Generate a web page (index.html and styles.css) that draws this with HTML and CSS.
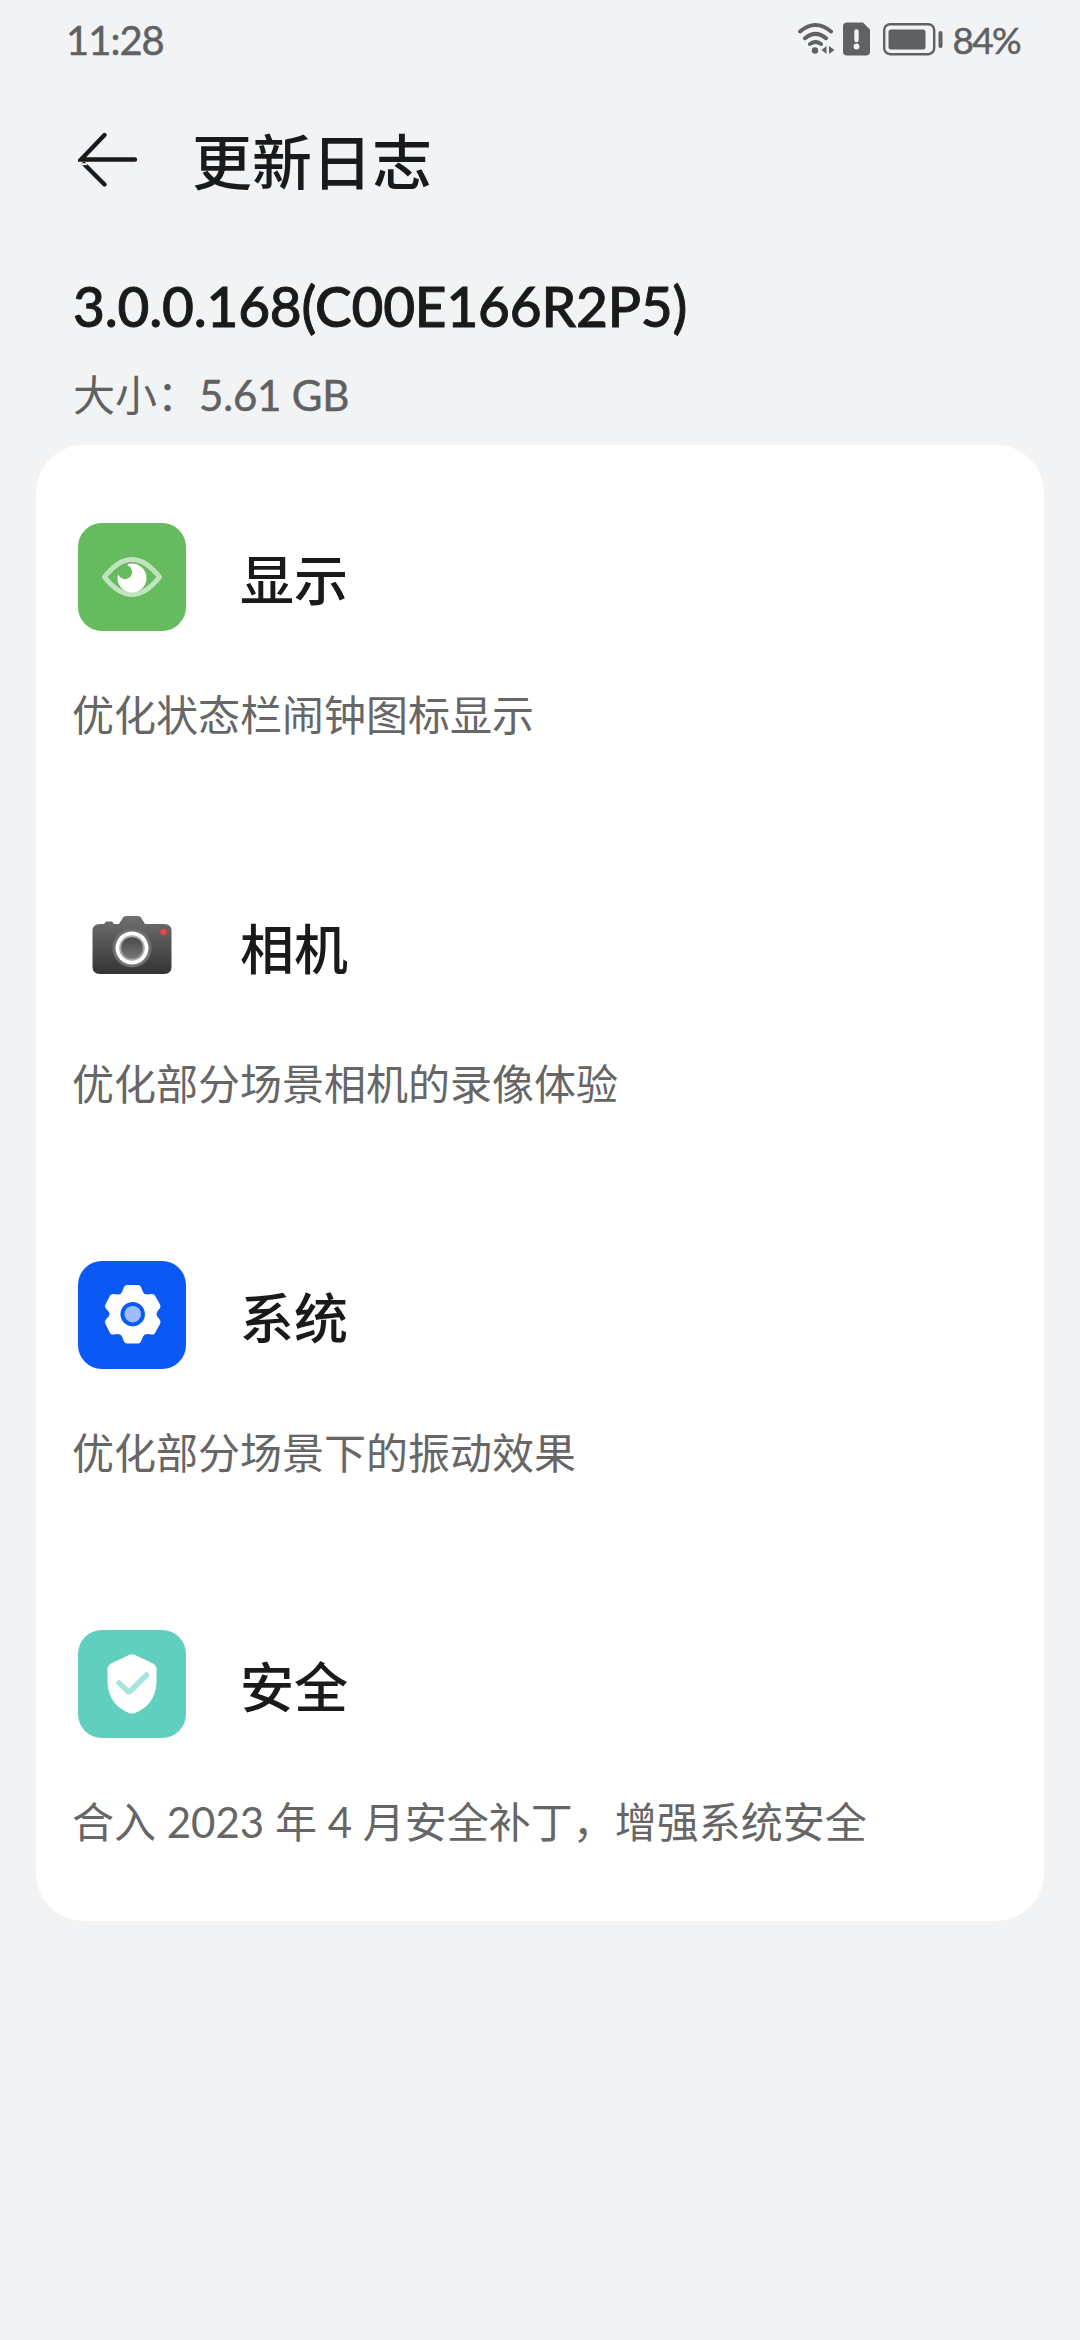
FILE: index.html
```html
<!DOCTYPE html>
<html lang="zh-CN">
<head>
<meta charset="utf-8">
<title>更新日志</title>
<link rel="stylesheet" href="styles.css">
</head>
<body>
<header class="status">
  <span class="clock">11:28</span>
  <div class="indicators">
    <svg class="wifi" width="40" height="34" viewBox="0 0 40 34" fill="none" stroke="#606163" stroke-width="4" stroke-linecap="round">
      <path d="M3 9.500Q18.500 -3.500 34 9.500M8 16.200Q18.500 7.500 29 16.200M13 22Q18.500 18 24 22"/>
      <circle cx="18" cy="28.500" r="3.200" fill="#606163" stroke="none"/>
      <path d="M29.500 24v8l-5-4zM32 24v8l5.500-4z" fill="#606163" stroke="none"/>
    </svg>
    <svg class="sim" width="27" height="34" viewBox="0 0 27 34">
      <path d="M4 0.500H20L27 7.500V29.500Q27 33.500 23 33.500H4Q0 33.500 0 29.500V4.500Q0 0.500 4 0.500Z" fill="#606163"/>
      <path d="M13.500 9.500V18" stroke="#f1f3f5" stroke-width="4.400" stroke-linecap="round"/>
      <circle cx="13.500" cy="24.500" r="2.900" fill="#f1f3f5"/>
    </svg>
    <svg class="battery" width="60" height="34" viewBox="0 0 60 34">
      <rect x="1.200" y="2.200" width="50" height="30" rx="6" fill="none" stroke="#606163" stroke-width="2.400"/>
      <rect x="5.500" y="7.500" width="37" height="20" rx="2.500" fill="#606163"/>
      <rect x="55.500" y="9" width="4" height="17" rx="2" fill="#606163"/>
    </svg>
    <span class="percent">84%</span>
  </div>
</header>
<nav class="titlebar">
  <svg class="back" width="60" height="56" viewBox="0 0 60 56" fill="none" stroke="#191a1b" stroke-width="4.400" stroke-linecap="round">
    <path d="M57 28.500H3L26.500 4"/>
    <path d="M6 33L26.500 53.500"/>
    <path d="M4 33.200h5" stroke="#f1f3f5" stroke-width="2" stroke-linecap="butt"/>
  </svg>
  <h1 class="title">更新日志</h1>
</nav>
<section class="release">
  <h2 class="version">3.0.0.168(C00E166R2P5)</h2>
  <p class="size">大小：<span class="amount">5.61 GB</span></p>
</section>
<main class="card">
  <article class="entry">
    <div class="heading">
      <svg width="108" height="108" viewBox="0 0 108 108">
        <rect width="108" height="108" rx="24" fill="#65bb5e"/>
        <path d="M26.500 54Q54 19 81.500 54Q54 89 26.500 54Z" fill="none" stroke="#c1e4bf" stroke-width="5" stroke-linejoin="round"/>
        <circle cx="54" cy="55" r="14.500" fill="#fff"/>
        <circle cx="47" cy="49" r="7.200" fill="#65bb5e"/>
        <path d="M39 51L42 43L50 40L49 45Z" fill="#65bb5e"/>
      </svg>
      <h3 class="name">显示</h3>
    </div>
    <p class="desc">优化状态栏闹钟图标显示</p>
  </article>
  <article class="entry">
    <div class="heading">
      <svg width="108" height="108" viewBox="0 0 108 108">
        <defs>
          <linearGradient id="body" x1="0" y1="0" x2="0" y2="1">
            <stop offset="0" stop-color="#707070"/>
            <stop offset="1" stop-color="#343434"/>
          </linearGradient>
          <linearGradient id="lens" x1="0" y1="0" x2="0" y2="1">
            <stop offset="0" stop-color="#484848"/>
            <stop offset="1" stop-color="#777"/>
          </linearGradient>
        </defs>
        <path d="M22 32H26L28 29.500H34L36 32H41L45 25.500Q46 24 48 24H60Q62 24 63 25.500L67 32H86Q93.500 32 93.500 39V75Q93.500 82 86 82H22Q14.500 82 14.500 75V39Q14.500 32 22 32Z" fill="url(#body)"/>
        <circle cx="54" cy="56" r="19.500" fill="#707070"/>
        <circle cx="54" cy="56" r="16.500" fill="#fff"/>
        <circle cx="54" cy="56" r="12.800" fill="#aaa9ae"/>
        <circle cx="54" cy="56" r="10.800" fill="url(#lens)"/>
        <circle cx="85.500" cy="40" r="3.200" fill="#f43e41"/>
      </svg>
      <h3 class="name">相机</h3>
    </div>
    <p class="desc">优化部分场景相机的录像体验</p>
  </article>
  <article class="entry">
    <div class="heading">
      <svg width="108" height="108" viewBox="0 0 108 108">
        <rect width="108" height="108" rx="24" fill="#0a59f7"/>
        <path d="M49 24H60Q62 24 63 26L65 31Q66 33.500 69 33.500L74 33Q76 33 77 34.500L82 43.500Q83 45.500 82 47L79 51Q78 53 79 55L82 59Q83 61 82 63L77 72Q76 74 74 73.500L69 73Q66 73 65 75.500L63 80.500Q62 82.500 60 82.500H49Q47 82.500 46 80.500L44 75.500Q43 73 40 73L35 73.500Q33 74 32 72L27.500 63Q26.500 61 27.500 59L31 55Q32 53 31 51L27.500 47Q26.500 45.500 27.500 43.500L32 34.500Q33 33 35 33L40 33.500Q43 33.500 44 31L46 26Q47 24 49 24Z" fill="#fff"/>
        <circle cx="54.700" cy="53.200" r="12.200" fill="#0a59f7"/>
        <circle cx="54.700" cy="53.200" r="8.300" fill="#9dbdfc"/>
      </svg>
      <h3 class="name">系统</h3>
    </div>
    <p class="desc">优化部分场景下的振动效果</p>
  </article>
  <article class="entry">
    <div class="heading">
      <svg width="108" height="108" viewBox="0 0 108 108">
        <rect width="108" height="108" rx="24" fill="#61cfbe"/>
        <path d="M51 25Q54 23.500 57 25L75 33.500Q78.500 35.500 78.500 39V53Q77 75 57 83Q54 84 51 83Q31 75 29.500 53V39Q29.500 35.500 33 33.500Z" fill="#fff"/>
        <path d="M41 53L49.500 61Q51 62.500 52.500 61L68.500 45" fill="none" stroke="#a5e5dc" stroke-width="5.500" stroke-linecap="round"/>
      </svg>
      <h3 class="name">安全</h3>
    </div>
    <p class="desc">合入 2023 年 4 月安全补丁，增强系统安全</p>
  </article>
</main>
</body>
</html>
```
FILE: styles.css
```css
* { box-sizing: border-box; }
body {
  margin: 0;
  width: 1080px;
  min-height: 2340px;
  background: #f1f3f5;
  color: #191a1b;
  font-family: Lato, "Noto Sans CJK SC", sans-serif;
}
h1, h2, h3, p { margin: 0; font-weight: 500; white-space: nowrap; }
svg { display: block; flex: none; }
.status {
  height: 80px;
  padding: 0 60px 0 66px;
  display: flex;
  justify-content: space-between;
  align-items: center;
  color: #606163;
  font-size: 40px;
  line-height: 80px;
}
.clock { letter-spacing: -1px; -webkit-text-stroke: 0.5px #606163; }
.indicators { display: flex; align-items: center; height: 75px; margin-bottom: 3px; }
.sim { margin-left: 6px; }
.battery { margin-left: 13px; }
.percent {
  margin-left: 10px;
  padding-top: 3px;
  font-size: 37px;
  letter-spacing: -1.700px;
  -webkit-text-stroke: 0.5px #606163;
}
.titlebar {
  height: 160px;
  padding-left: 78px;
  display: flex;
  align-items: center;
}
.back { margin-bottom: 2px; }
.title { margin-left: 54px; padding-top: 4px; font-size: 60px; line-height: 90px; }
.release { height: 205px; padding: 30px 73px 0; }
.version {
  font-size: 55px;
  line-height: 72px;
  letter-spacing: -0.200px;
  -webkit-text-stroke: 0.9px #191a1b;
}
.size { margin-top: 22px; font-size: 42px; line-height: 62px; color: #606163; font-weight: 400; }
.amount { letter-spacing: -0.200px; -webkit-text-stroke: 0.5px #606163; }
.card {
  margin: 0 36px;
  background: #fff;
  border-radius: 48px;
}
.entry { height: 369px; padding: 78px 36px 0; }
.heading { display: flex; align-items: center; padding-left: 6px; gap: 54px; height: 108px; }
.name { padding-top: 7px; font-size: 54px; line-height: 100px; }
.desc { margin-top: 54px; font-size: 42px; line-height: 61px; color: #666; font-weight: 400; }
```
